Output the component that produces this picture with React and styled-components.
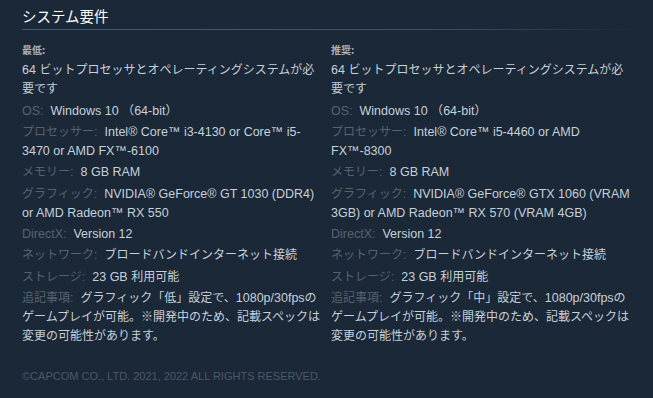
import styled, { createGlobalStyle } from "styled-components";

const GlobalStyle = createGlobalStyle`
  html, body {
    margin: 0;
    padding: 0;
    background: #1b2838;
  }
  body {
    width: 653px;
    height: 398px;
    overflow: hidden;
  }
`;

const Page = styled.div`
  width: 616px;
  padding: 6px 0 0 22px;
  font-family: "Liberation Sans", Arial, "Noto Sans CJK JP", sans-serif;
  color: #acb2b8;
`;

const Title = styled.h2`
  margin: 0;
  font-size: 14.5px;
  line-height: 20px;
  font-weight: normal;
  color: #ffffff;
  font-family: "Noto Sans CJK JP", sans-serif;
  background-image: linear-gradient(
    to right,
    #445a6f 0%,
    #3a4f63 70%,
    rgba(27, 40, 56, 0) 100%
  );
  background-size: 100% 1px;
  background-position: left bottom;
  background-repeat: no-repeat;
  padding-bottom: 4px;
`;

const Columns = styled.div`
  display: grid;
  grid-template-columns: 300px 300px;
  column-gap: 9px;
  margin-top: 13px;
`;

const Column = styled.div`
  display: flex;
  flex-direction: column;
`;

const Heading = styled.div`
  font-size: 10px;
  line-height: 14px;
  font-weight: bold;
  color: #acb2b8;
  margin-bottom: 4px;
  font-family: "Noto Sans CJK JP", sans-serif;
`;

const List = styled.ul`
  list-style: none;
  margin: 0;
  padding: 0;
  display: flex;
  flex-direction: column;
  gap: 2px;
`;

const Item = styled.li`
  font-size: 12.5px;
  line-height: 19.25px;
  color: #c6d0d8;
`;

const Label = styled.span`
  color: #56636e;
  margin-right: 7px;
`;

// Japanese runs sit at 12px so the kana line up like the original
const Cjk = styled.span`
  font-family: "Noto Sans CJK JP", sans-serif;
  font-size: 12px;
  line-height: 1;
`;

const Copyright = styled.div`
  margin-top: 22px;
  font-size: 11px;
  line-height: 14px;
  color: #4b5866;
`;

const CJK_RUN = /([\u3000-\u30ff\u4e00-\u9fff\uff00-\uffef\u203b]+)/;

function Text({ children }) {
  return children
    .split(CJK_RUN)
    .filter(Boolean)
    .map((part, i) =>
      CJK_RUN.test(part) ? <Cjk key={i}>{part}</Cjk> : part,
    );
}

const minimum = [
  [null, "64 ビットプロセッサとオペレーティングシステムが必要です"],
  ["OS:", "Windows 10 （64-bit）"],
  ["プロセッサー:", "Intel® Core™ i3-4130 or Core™ i5-3470 or AMD FX™-6100"],
  ["メモリー:", "8 GB RAM"],
  ["グラフィック:", "NVIDIA® GeForce® GT 1030 (DDR4) or AMD Radeon™ RX 550"],
  ["DirectX:", "Version 12"],
  ["ネットワーク:", "ブロードバンドインターネット接続"],
  ["ストレージ:", "23 GB 利用可能"],
  [
    "追記事項:",
    "グラフィック「低」設定で、1080p/30fpsのゲームプレイが可能。※開発中のため、記載スペックは変更の可能性があります。",
  ],
];

const recommended = [
  [null, "64 ビットプロセッサとオペレーティングシステムが必要です"],
  ["OS:", "Windows 10 （64-bit）"],
  ["プロセッサー:", "Intel® Core™ i5-4460 or AMD FX™-8300"],
  ["メモリー:", "8 GB RAM"],
  [
    "グラフィック:",
    "NVIDIA® GeForce® GTX 1060 (VRAM 3GB) or AMD Radeon™ RX 570 (VRAM 4GB)",
  ],
  ["DirectX:", "Version 12"],
  ["ネットワーク:", "ブロードバンドインターネット接続"],
  ["ストレージ:", "23 GB 利用可能"],
  [
    "追記事項:",
    "グラフィック「中」設定で、1080p/30fpsのゲームプレイが可能。※開発中のため、記載スペックは変更の可能性があります。",
  ],
];

function ReqColumn({ heading, rows }) {
  return (
    <Column>
      <Heading>{heading}</Heading>
      <List>
        {rows.map(([label, value], i) => (
          <Item key={i}>
            {label && (
              <Label>
                <Text>{label}</Text>
              </Label>
            )}
            <Text>{value}</Text>
          </Item>
        ))}
      </List>
    </Column>
  );
}

export default function App() {
  return (
    <>
      <GlobalStyle />
      <Page>
        <Title>システム要件</Title>
        <Columns>
          <ReqColumn heading="最低:" rows={minimum} />
          <ReqColumn heading="推奨:" rows={recommended} />
        </Columns>
        <Copyright>©CAPCOM CO., LTD. 2021, 2022 ALL RIGHTS RESERVED.</Copyright>
      </Page>
    </>
  );
}
